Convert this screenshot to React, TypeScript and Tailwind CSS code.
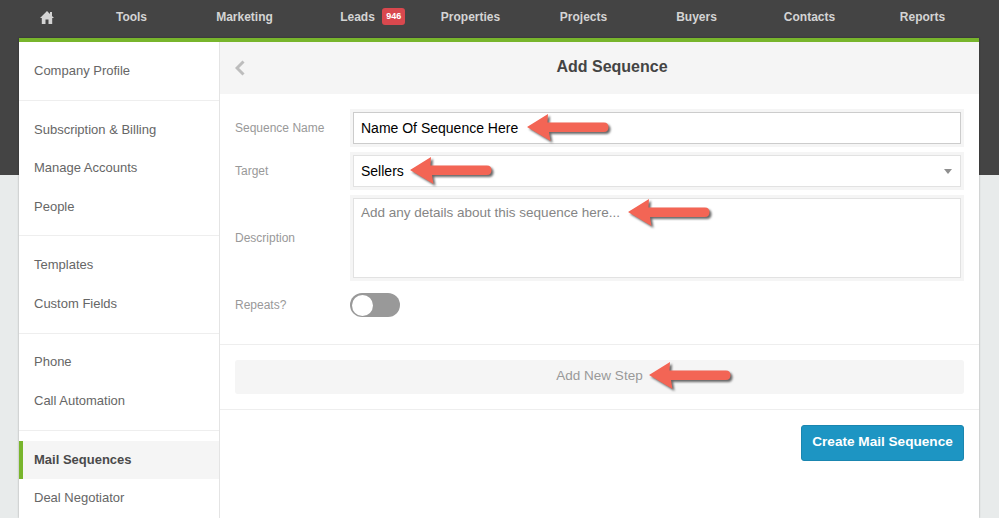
const navItems = ["Tools", "Marketing", "Leads", "Properties", "Projects", "Buyers", "Contacts", "Reports"]

const sideGroups = [
  ["Company Profile"],
  ["Subscription & Billing", "Manage Accounts", "People"],
  ["Templates", "Custom Fields"],
  ["Phone", "Call Automation"],
  ["Mail Sequences", "Deal Negotiator"],
]

function Arrow({ className }: { className: string }) {
  return (
    <svg
      viewBox="0 0 90 32"
      className={`absolute w-[90px] h-[32px] drop-shadow-[2px_2px_1px_rgba(40,40,40,0.7)] ${className}`}
    >
      <path
        d="M1 14 L22 1 L21.5 9.5 L78 9.5 Q82.5 9.5 82.5 14.2 Q82.5 19 78 19 L23 19 L24.5 28 Z"
        fill="#f36555"
      />
    </svg>
  )
}

export default function App() {
  return (
    <div className="h-[518px] overflow-hidden bg-[linear-gradient(#444444_175px,#e8ebeb_175px)] font-['Liberation_Sans',Arial,sans-serif]">
      {/* Top nav */}
      <div className="flex items-center h-[38px] pl-[19px] pb-[4px]">
        <div className="w-[56px] flex justify-center">
          <svg viewBox="0 0 14 13" className="w-[14px] h-[13px]">
            <path d="M7 0 L10 3 V1 H12 V5 L14 7 H12.2 V13 H8.5 V8.5 H5.5 V13 H1.8 V7 H0 Z" fill="#d4d4d4" />
          </svg>
        </div>
        {navItems.map((item) => (
          <div key={item} className="w-[113px] flex items-center justify-center text-[12px] font-bold text-[#d4d4d4]">
            {item === "Leads" ? (
              <span className="relative">
                {item}
                <span className="absolute left-[42px] top-[0px] w-[23px] h-[17px] text-center bg-[#d9484e] text-white text-[9px] rounded-[3px] leading-[17px]">
                  946
                </span>
              </span>
            ) : (
              item
            )}
          </div>
        ))}
      </div>

      {/* Card */}
      <div className="mx-[19px] w-[960px] h-[480px] flex bg-white border-t-[4px] border-[#78b52c] shadow-[0_0_2px_rgba(0,0,0,0.3)]">
        {/* Sidebar */}
        <div className="w-[201px] shrink-0 border-r border-[#e4e4e4]">
          {sideGroups.map((group, i) => (
            <div
              key={i}
              className={
                i === 0
                  ? "pt-[9.75px] pb-[10px] border-b border-[#eeeeee]"
                  : i === 4
                    ? "pt-[10px]"
                    : "pt-[9.5px] pb-[10px] border-b border-[#eeeeee]"
              }
            >
              {group.map((label) =>
                label === "Mail Sequences" ? (
                  <div
                    key={label}
                    className="h-[38.3px] flex items-center pl-[11px] border-l-[4px] border-[#78b52c] bg-[#f5f5f5] text-[13px] font-bold text-[#4a4a4a]"
                  >
                    {label}
                  </div>
                ) : (
                  <div key={label} className="h-[38.3px] flex items-center pl-[15px] text-[13px] text-[#666666]">
                    {label}
                  </div>
                )
              )}
            </div>
          ))}
        </div>

        {/* Main */}
        <div className="flex-1 min-w-0">
          <div className="h-[52px] flex items-center px-[15px] bg-[#f5f5f5]">
            <svg viewBox="0 0 10 16" className="w-[10px] h-[16px]">
              <path d="M8.5 1.5 L2 8 L8.5 14.5" fill="none" stroke="#bdbdbd" strokeWidth="3" />
            </svg>
            <div className="flex-1 pl-[15px] pb-[2px] text-center text-[16px] font-bold text-[#444444]">Add Sequence</div>
          </div>

          <div className="pl-[15px] pr-[18px] pt-[18px] h-[251px] border-b border-[#eeeeee]">
            <div className="flex items-center h-[32px]">
              <div className="w-[118px] pb-[1px] text-[12px] text-[#999999]">Sequence Name</div>
              <div className="relative flex-1 h-[32px] flex items-center px-[7px] bg-white border border-[#cccccc] ring-[3px] ring-[#f5f5f5] text-[14px] text-black">
                Name Of Sequence Here
                <Arrow className="left-[172px] top-[0px]" />
              </div>
            </div>
            <div className="flex items-center h-[32px] mt-[11px]">
              <div className="w-[118px] pb-[1px] text-[12px] text-[#999999]">Target</div>
              <div className="relative flex-1 h-[32px] flex items-center justify-between px-[7px] bg-white border border-[#e2e2e2] ring-[3px] ring-[#f5f5f5] text-[14px] text-black">
                Sellers
                <svg viewBox="0 0 8 5" className="w-[8px] h-[5px] mr-[1px]">
                  <path d="M0 0 H8 L4 5 Z" fill="#8f8f8f" />
                </svg>
                <Arrow className="left-[55px] top-[0px]" />
              </div>
            </div>
            <div className="flex items-center h-[80px] mt-[11px]">
              <div className="w-[118px] pb-[1px] text-[12px] text-[#999999]">Description</div>
              <div className="relative flex-1 h-[80px] px-[7px] pt-[5px] bg-white border border-[#e2e2e2] ring-[3px] ring-[#f5f5f5] text-[13.5px] leading-[18px] text-[#858585]">
                Add any details about this sequence here...
                <Arrow className="left-[273px] top-[-1px]" />
              </div>
            </div>
            <div className="flex items-center h-[24px] mt-[15px]">
              <div className="w-[115px] pb-[1px] text-[12px] text-[#999999]">Repeats?</div>
              <div className="w-[50px] h-[24px] rounded-full bg-[#999999] p-[1.5px]">
                <div className="w-[21px] h-[21px] rounded-full bg-white" />
              </div>
            </div>
          </div>

          <div className="h-[65px] px-[15px] flex items-center border-b border-[#eeeeee]">
            <div className="relative w-[729px] h-[34px] pb-[1px] rounded-[3px] bg-[#f5f5f5] flex items-center justify-center text-[13.5px] text-[#999999]">
              Add New Step
              <Arrow className="left-[413px] top-[1px]" />
            </div>
          </div>

          <div className="flex justify-end pt-[15px] pr-[15px]">
            <button className="w-[163px] h-[36px] pb-[1px] rounded-[3px] bg-[#1d95c3] border border-[#1a86b0] text-[13.6px] font-bold text-white">
              Create Mail Sequence
            </button>
          </div>
        </div>
      </div>
    </div>
  )
}
